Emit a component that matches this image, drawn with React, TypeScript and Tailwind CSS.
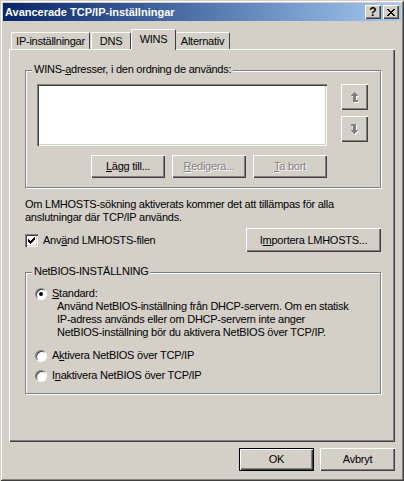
import React from 'react';

const raised =
  'bg-[#d4d0c8] shadow-[inset_1px_1px_#ffffff,inset_-1px_-1px_#404040,inset_-2px_-2px_#808080]';
const disabledText = 'text-[#808080] [text-shadow:1px_1px_0_#ffffff]';

function Btn({
  children,
  className = '',
  disabled = false,
}: {
  children: React.ReactNode;
  className?: string;
  disabled?: boolean;
}) {
  return (
    <div className={`h-[23px] flex items-center justify-center ${raised} ${disabled ? disabledText : ''} ${className}`}>
      {children}
    </div>
  );
}

function ArrowIcon({ down = false }: { down?: boolean }) {
  const rects = down
    ? [
        [1, 0, 5, 2],
        [3, 2, 3, 4],
        [1, 6, 7, 1],
        [2, 7, 5, 1],
        [3, 8, 3, 1],
        [4, 9, 1, 1],
      ]
    : [
        [4, 0, 1, 1],
        [3, 1, 3, 1],
        [2, 2, 5, 1],
        [1, 3, 7, 1],
        [3, 4, 3, 4],
        [3, 8, 5, 2],
      ];
  return (
    <svg width="10" height="11" viewBox="0 0 10 11" shapeRendering="crispEdges">
      {rects.map(([x, y, w, h], i) => (
        <rect key={`s${i}`} x={x + 1} y={y + 1} width={w} height={h} fill="#ffffff" />
      ))}
      {rects.map(([x, y, w, h], i) => (
        <rect key={`r${i}`} x={x} y={y} width={w} height={h} fill="#808080" />
      ))}
    </svg>
  );
}

function Radio({ checked = false }: { checked?: boolean }) {
  return (
    <div className="w-[12px] h-[12px] rounded-full bg-white border border-[#808080] border-r-white border-b-white shadow-[inset_1px_1px_#404040] flex items-center justify-center shrink-0">
      {checked && <div className="w-[4px] h-[4px] rounded-full bg-black" />}
    </div>
  );
}

function GroupBox({
  label,
  className = '',
  children,
}: {
  label: React.ReactNode;
  className?: string;
  children: React.ReactNode;
}) {
  return (
    <div className={`relative border border-[#808080] shadow-[1px_1px_0_#ffffff,inset_1px_1px_0_#ffffff] ${className}`}>
      <div className="absolute left-[6px] top-[-8px] px-[2px] bg-[#d4d0c8] leading-[13px]">{label}</div>
      {children}
    </div>
  );
}

export default function App() {
  return (
    <div className="w-[404px] h-[481px] bg-[#d4d0c8] p-[3px] flex flex-col font-['Liberation_Sans',Arial,sans-serif] text-[11px] leading-[13px] tracking-[-0.25px] text-black shadow-[inset_1px_1px_#d4d0c8,inset_-1px_-1px_#404040,inset_2px_2px_#ffffff,inset_-2px_-2px_#808080]">
      {/* title bar */}
      <div className="h-[18px] flex items-center pl-[2px] pr-[2px] bg-gradient-to-r from-[#0a246a] to-[#a6caf0] tracking-normal">
        <span className="font-bold text-white">Avancerade TCP/IP-inställningar</span>
        <div className="ml-auto flex gap-[2px]">
          <div className={`w-[16px] h-[14px] flex items-center justify-center font-bold text-[12px] leading-[14px] ${raised}`}>?</div>
          <div className={`w-[16px] h-[14px] flex items-center justify-center ${raised}`}>
            <svg width="8" height="7" viewBox="0 0 8 7" shapeRendering="crispEdges">
              {[0, 1, 2, 3, 4, 5, 6].map((i) => (
                <g key={i}>
                  <rect x={i} y={i} width="2" height="1" fill="#000" />
                  <rect x={6 - i} y={i} width="2" height="1" fill="#000" />
                </g>
              ))}
            </svg>
          </div>
        </div>
      </div>

      <div className="px-[6px] mt-[8px] flex flex-col">
        {/* tabs */}
        <div className="h-[20px] flex items-end pl-[2px]">
          <div className="w-[79px] h-[17px] flex items-center justify-center border-t border-l border-white border-r border-r-[#404040] rounded-t-[2px]">
            IP-inställningar
          </div>
          <div className="ml-[1px] w-[40px] h-[17px] flex items-center justify-center border-t border-l border-white border-r border-r-[#404040] rounded-t-[2px]">
            DNS
          </div>
          <div className="relative z-10 -mb-px w-[45px] h-[21px] pb-[2px] flex items-center justify-center bg-[#d4d0c8] border-t border-l border-white border-r border-r-[#404040] rounded-t-[2px]">
            WINS
          </div>
          <div className="w-[54px] h-[17px] flex items-center justify-center border-t border-white border-r border-r-[#404040] rounded-t-[2px]">
            Alternativ
          </div>
        </div>

        {/* panel */}
        <div className="h-[393px] pl-[16px] pr-[14px] pt-[21px] flex flex-col shadow-[inset_1px_1px_#ffffff,inset_-1px_-1px_#404040,inset_-2px_-2px_#808080]">
          <GroupBox
            label={
              <span>
                WINS-<u>a</u>dresser, i den ordning de används:
              </span>
            }
            className="h-[118px] pt-[13px] pl-[11px]"
          >
            <div className="flex items-start">
              <div className="w-[290px] h-[62px] bg-white shadow-[inset_1px_1px_#808080,inset_2px_2px_#404040,inset_-1px_-1px_#ffffff,inset_-2px_-2px_#d4d0c8]" />
              <div className="ml-[14px] flex flex-col gap-[6px]">
                <div className={`w-[27px] h-[26px] flex items-center justify-center ${raised}`}>
                  <ArrowIcon />
                </div>
                <div className={`w-[27px] h-[26px] flex items-center justify-center ${raised}`}>
                  <ArrowIcon down />
                </div>
              </div>
            </div>
            <div className="w-[290px] mt-[9px] flex justify-end gap-[7px]">
              <Btn className="w-[74px]">
                <span>
                  <u>L</u>ägg till...
                </span>
              </Btn>
              <Btn className="w-[74px]" disabled>
                <span>
                  <u>R</u>edigera...
                </span>
              </Btn>
              <Btn className="w-[74px]" disabled>
                <span>
                  <u>T</u>a bort
                </span>
              </Btn>
            </div>
          </GroupBox>

          <p className="mt-[10px]">
            Om LMHOSTS-sökning aktiverats kommer det att tillämpas för alla
            <br />
            anslutningar där TCP/IP används.
          </p>

          <div className="mt-[4px] flex items-center">
            <div className="w-[13px] h-[13px] bg-white flex items-center justify-center shadow-[inset_1px_1px_#808080,inset_2px_2px_#404040,inset_-1px_-1px_#ffffff,inset_-2px_-2px_#d4d0c8]">
              <svg width="7" height="7" viewBox="0 0 7 7" shapeRendering="crispEdges">
                <path d="M0 2h1v1h1v1h1v-1h1v-1h1v-1h1v-1h1v3h-1v1h-1v1h-1v1h-1v1h-1v-1h-1v-1h-1z" fill="#000" />
              </svg>
            </div>
            <span className="ml-[5px]">
              Anv<u>ä</u>nd LMHOSTS-filen
            </span>
            <Btn className="ml-auto w-[135px] h-[24px]">
              <span>
                I<u>m</u>portera LMHOSTS...
              </span>
            </Btn>
          </div>

          <GroupBox label="NetBIOS-INSTÄLLNING" className="mt-[20px] h-[122px] pt-[14px] pl-[9px]">
            <div className="flex items-center h-[13px]">
              <Radio checked />
              <span className="ml-[5px]">
                <u>S</u>tandard:
              </span>
            </div>
            <p className="pl-[22px]">
              Använd NetBIOS-inställning från DHCP-servern. Om en statisk
              <br />
              IP-adress används eller om DHCP-servern inte anger
              <br />
              NetBIOS-inställning bör du aktivera NetBIOS över TCP/IP.
            </p>
            <div className="mt-[10px] flex items-center h-[13px]">
              <Radio />
              <span className="ml-[5px]">
                A<u>k</u>tivera NetBIOS över TCP/IP
              </span>
            </div>
            <div className="mt-[7px] flex items-center h-[13px]">
              <Radio />
              <span className="ml-[5px]">
                I<u>n</u>aktivera NetBIOS över TCP/IP
              </span>
            </div>
          </GroupBox>
        </div>

        {/* dialog buttons */}
        <div className="mt-[6px] flex justify-end gap-[6px]">
          <div className="w-[75px] h-[23px] flex items-center justify-center border border-black bg-[#d4d0c8] shadow-[inset_1px_1px_#ffffff,inset_-1px_-1px_#404040,inset_-2px_-2px_#808080]">
            OK
          </div>
          <Btn className="w-[75px]">Avbryt</Btn>
        </div>
      </div>
    </div>
  );
}
